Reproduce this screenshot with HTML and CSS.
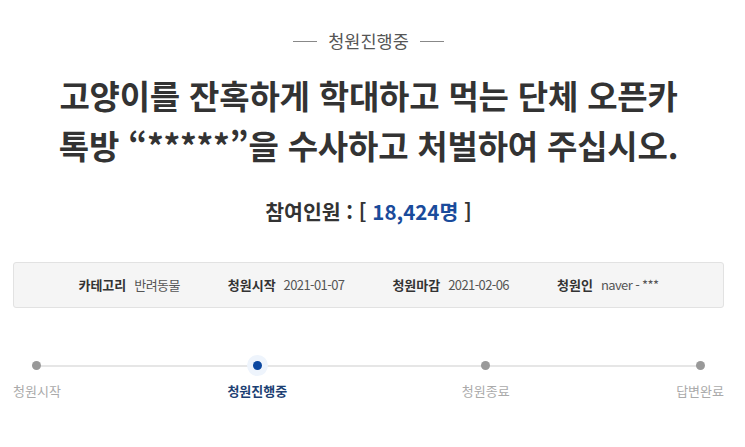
FILE: index.html
```html
<!DOCTYPE html>
<html lang="ko">
<head>
<meta charset="utf-8">
<link rel="stylesheet" href="styles.css">
</head>
<body>
<div class="page">
  <div class="status"><span class="rule"></span><span class="status-text">청원진행중</span><span class="rule"></span></div>
  <h1 class="title">고양이를 잔혹하게 학대하고 먹는 단체 오픈카<br>톡방 “*****”을 수사하고 처벌하여 주십시오.</h1>
  <div class="count">참여인원 : [ <span class="num">18,424명</span> ]</div>
  <div class="info">
    <div class="item"><span class="label">카테고리</span><span class="value">반려동물</span></div>
    <div class="item"><span class="label">청원시작</span><span class="value">2021-01-07</span></div>
    <div class="item"><span class="label">청원마감</span><span class="value">2021-02-06</span></div>
    <div class="item"><span class="label">청원인</span><span class="value">naver - ***</span></div>
  </div>
  <div class="steps">
    <div class="step"><span class="dot"></span><span class="step-label">청원시작</span></div>
    <div class="step active"><span class="dot"></span><span class="step-label">청원진행중</span></div>
    <div class="step"><span class="dot"></span><span class="step-label">청원종료</span></div>
    <div class="step"><span class="dot"></span><span class="step-label">답변완료</span></div>
  </div>
</div>
</body>
</html>
```
FILE: styles.css
```css
html, body {
  margin: 0;
  padding: 0;
  background: #fff;
}
body {
  font-family: "Noto Sans CJK KR", "Noto Sans", sans-serif;
  color: #333;
}
.page {
  padding: 0 21px 0 13px;
}
.status {
  display: flex;
  justify-content: center;
  align-items: center;
  gap: 11px;
  padding-top: 29px;
  height: 24px;
}
.rule {
  width: 24px;
  height: 1px;
  background: #888;
}
.status-text {
  font-size: 17.5px;
  color: #555;
  line-height: 24px;
}
.title {
  margin: 17px 0 0;
  text-align: center;
  font-size: 33px;
  font-weight: 700;
  line-height: 50px;
  color: #333;
  letter-spacing: -0.2px;
}
.count {
  margin-top: 26px;
  text-align: center;
  font-size: 20.5px;
  font-weight: 700;
  line-height: 30px;
  color: #333;
}
.count .num {
  color: #1a4b9b;
}
.info {
  margin-top: 36px;
  height: 44px;
  border: 1px solid #e2e2e2;
  border-radius: 3px;
  background: #f5f5f5;
  display: flex;
  justify-content: center;
  align-items: center;
  gap: 48px;
}
.item {
  display: flex;
  gap: 8px;
  font-size: 13px;
  line-height: 18px;
}
.label {
  font-weight: 700;
  color: #333;
}
.value {
  color: #555;
  letter-spacing: -0.6px;
}
.steps {
  position: relative;
  margin-top: 53px;
  display: flex;
  justify-content: space-between;
}
.steps::before {
  content: "";
  position: absolute;
  left: 24px;
  right: 24px;
  top: 4px;
  height: 2px;
  background: #e6e6e6;
}
.step {
  position: relative;
  display: flex;
  flex-direction: column;
  align-items: center;
  gap: 12px;
}
.step.active {
  margin-right: 8px;
}
.dot {
  width: 9px;
  height: 9px;
  border-radius: 50%;
  background: #999;
}
.step.active .dot {
  background: #0b47a0;
  box-shadow: 0 0 0 6px #eef4fc;
}
.step-label {
  font-size: 13px;
  line-height: 18px;
  color: #aaa;
}
.step.active .step-label {
  color: #1d3f73;
  font-weight: 700;
}
```
